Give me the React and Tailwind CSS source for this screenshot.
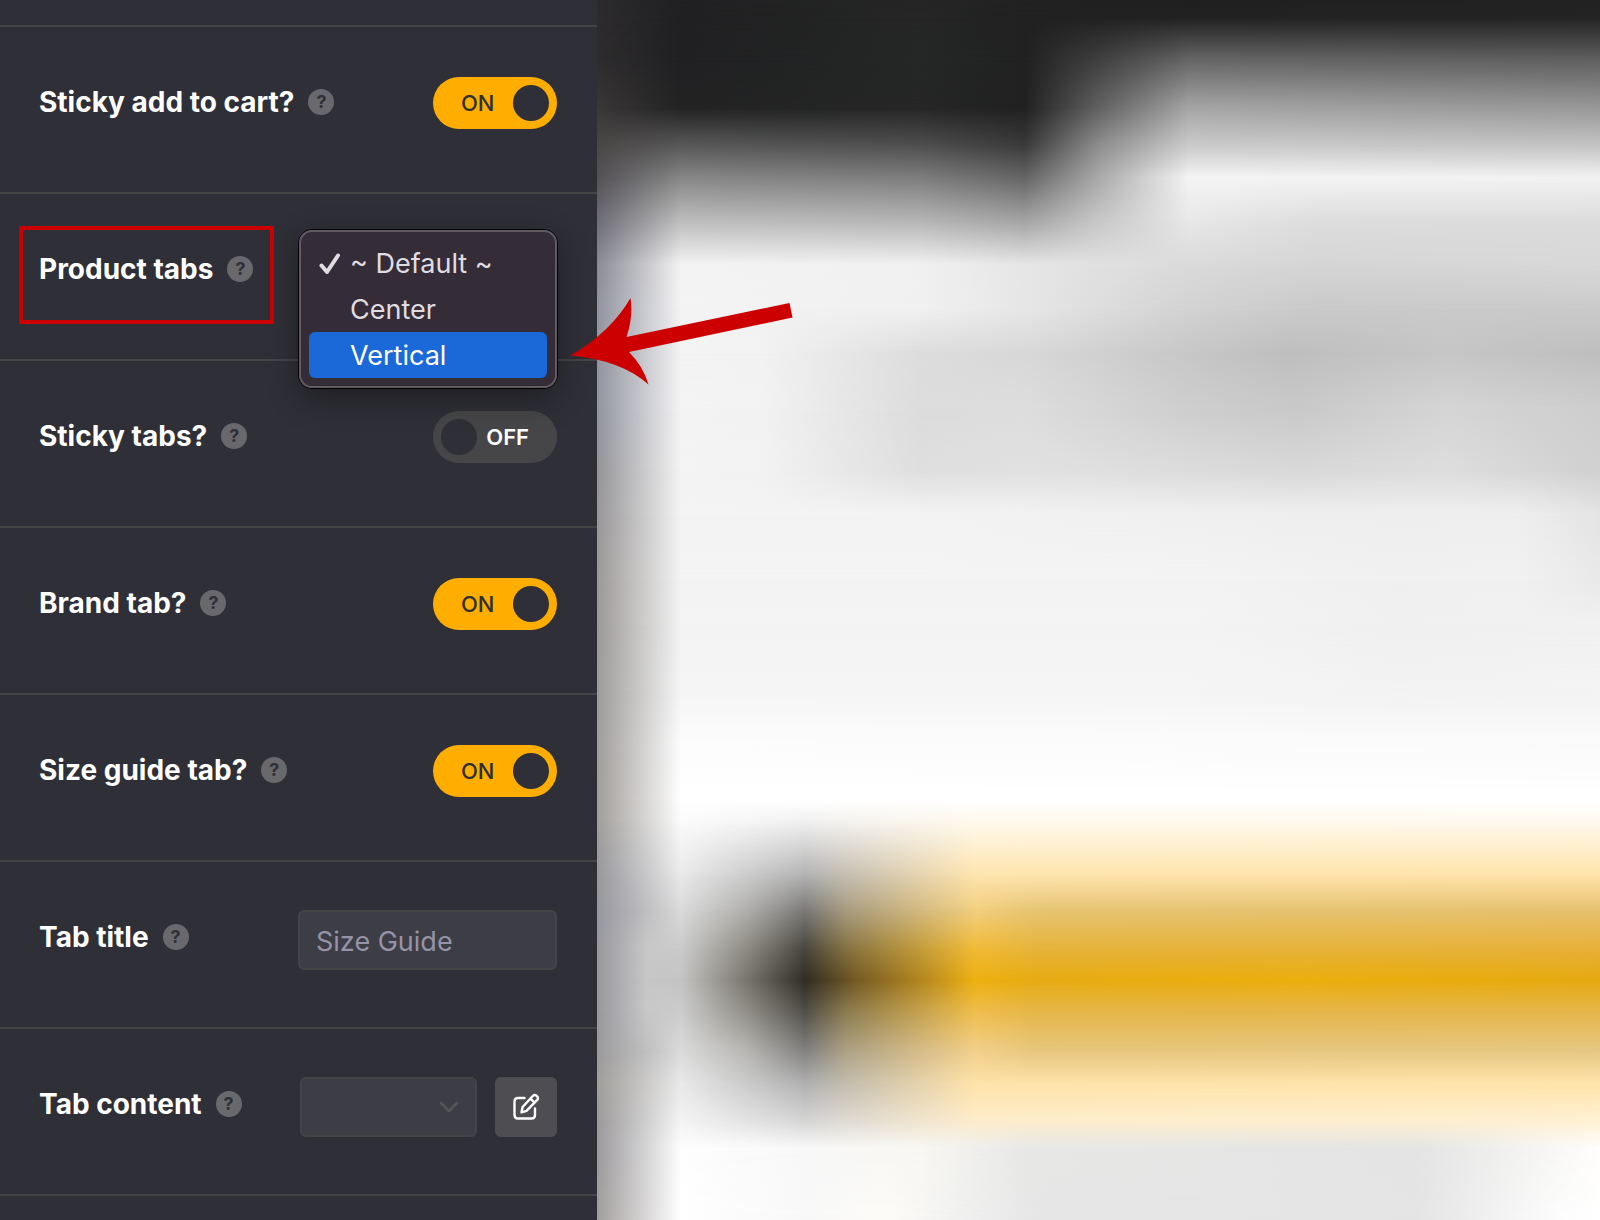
import { ChevronDown } from "lucide-react";

// Blurred page preview: each row is a y position and its horizontal colour stops.
const PREVIEW_ROWS = [
  [0, [[0, "#2c2b2d"], [84, "#202022"], [323, "#252625"], [428, "#212122"], [592, "#1f1f20"], [1003, "#222222"]]],
  [18, [[0, "#2d2b2d"], [84, "#202022"], [323, "#252625"], [428, "#212122"], [592, "#222222"], [1003, "#242424"]]],
  [60, [[0, "#2e2c2e"], [84, "#202022"], [323, "#252726"], [428, "#212122"], [592, "#666666"], [1003, "#606060"]]],
  [108, [[0, "#3a3737"], [84, "#232324"], [323, "#252625"], [428, "#212122"], [500, "#606060"], [592, "#a5a5a5"], [1003, "#989898"]]],
  [145, [[0, "#4b4747"], [84, "#585858"], [323, "#4f4f4f"], [428, "#3a3a3a"], [500, "#8c8c8c"], [592, "#cacaca"], [1003, "#c3c3c3"]]],
  [178, [[0, "#545257"], [84, "#878787"], [323, "#7e7e7e"], [428, "#666666"], [500, "#a8a8a8"], [592, "#f4f4f4"], [1003, "#f2f2f2"]]],
  [220, [[0, "#6d6c74"], [84, "#bcbcbc"], [323, "#b4b4b4"], [428, "#a2a2a2"], [500, "#c6c6c6"], [592, "#e8e8e8"], [720, "#dddddd"], [1003, "#dcdcdc"]]],
  [265, [[0, "#8a8b95"], [84, "#f3f3f3"], [323, "#f1f1f1"], [428, "#e6e6e6"], [592, "#dadada"], [720, "#d5d5d5"], [1003, "#d8d8d8"]]],
  [310, [[0, "#92949f"], [84, "#f3f3f3"], [323, "#f0f0f0"], [428, "#e6e6e6"], [592, "#d2d2d2"], [720, "#c9c9c9"], [1003, "#cacaca"]]],
  [352, [[0, "#92949f"], [84, "#f3f3f3"], [165, "#f2f2f2"], [323, "#dddddd"], [428, "#d8d8d8"], [592, "#c7c7c7"], [690, "#bebebe"], [850, "#c6c6c6"], [1003, "#bebebe"]]],
  [410, [[0, "#92949f"], [84, "#f3f3f3"], [165, "#f2f2f2"], [323, "#dcdcdc"], [428, "#dddddd"], [592, "#cecece"], [700, "#c9c9c9"], [850, "#d5d5d5"], [1003, "#cecece"]]],
  [470, [[0, "#949498"], [84, "#f3f3f3"], [165, "#f2f2f2"], [323, "#dedede"], [428, "#e1e1e1"], [700, "#d8d8d8"], [850, "#dddddd"], [1003, "#d0d0d0"]]],
  [515, [[0, "#989698"], [84, "#f3f3f3"], [323, "#f3f3f3"], [700, "#efefef"], [920, "#efefef"], [1003, "#e4e4e4"]]],
  [580, [[0, "#9c9997"], [84, "#f3f3f3"], [592, "#f3f3f3"], [800, "#f0f0f0"], [920, "#f1f1f1"], [1003, "#e9e9e9"]]],
  [625, [[0, "#9c9997"], [84, "#f3f3f3"], [592, "#f3f3f3"], [800, "#f0f0f0"], [1003, "#f1f1f1"]]],
  [690, [[0, "#9d9b99"], [84, "#f5f5f5"], [592, "#f5f5f5"], [800, "#f2f2f2"], [1003, "#f3f3f3"]]],
  [750, [[0, "#9f9c9a"], [84, "#fdfdfd"], [1003, "#fbfbfb"]]],
  [800, [[0, "#a19d9a"], [84, "#ffffff"], [1003, "#ffffff"]]],
  [822, [[0, "#a09d9a"], [84, "#fbfbfb"], [208, "#f0f0f0"], [378, "#fff9ec"], [1003, "#fff9ee"]]],
  [875, [[0, "#97979c"], [84, "#e9e9e9"], [208, "#b2b2b2"], [378, "#fee4ae"], [1003, "#ffe3a9"]]],
  [910, [[0, "#96969d"], [84, "#dadada"], [150, "#b0afad"], [208, "#7b7a78"], [250, "#a99c80"], [378, "#f2cf7f"], [440, "#e6c474"], [1003, "#e6c170"]]],
  [950, [[0, "#97979d"], [50, "#c8c8c8"], [84, "#cacaca"], [150, "#8c8a80"], [208, "#47453c"], [250, "#85713f"], [378, "#f0ba35"], [440, "#e6b338"], [1003, "#e6b036"]]],
  [980, [[0, "#98989d"], [50, "#c6c6c6"], [84, "#c4c4c4"], [150, "#78756b"], [208, "#302d24"], [260, "#765a23"], [330, "#b98a1e"], [378, "#edb010"], [440, "#e6ab12"], [700, "#ebae0d"], [1003, "#e5a910"]]],
  [1010, [[0, "#97979d"], [50, "#c8c8c8"], [84, "#cbcbcb"], [150, "#8f8d85"], [208, "#504e47"], [250, "#8b7a4e"], [378, "#efbd49"], [440, "#e6b545"], [1003, "#e6b548"]]],
  [1050, [[0, "#9a999b"], [84, "#dadada"], [150, "#b6b5b2"], [208, "#81807f"], [250, "#ada184"], [378, "#f2cf8a"], [440, "#e6c67c"], [1003, "#e6c782"]]],
  [1085, [[0, "#a09d9a"], [84, "#e9e9e9"], [208, "#b2b2b2"], [378, "#fee3ab"], [1003, "#ffe4ac"]]],
  [1120, [[0, "#9c9a9b"], [84, "#f3f3f3"], [208, "#d4d4d4"], [378, "#fdecca"], [1003, "#fff0d2"]]],
  [1148, [[0, "#9b999c"], [84, "#fefefe"], [208, "#f8f8f8"], [323, "#f8f7f3"], [428, "#e8e8e7"], [820, "#e4e4e4"], [1003, "#fffefc"]]],
  [1220, [[0, "#a29e9d"], [84, "#ffffff"], [208, "#f8f8f8"], [290, "#fcfbf8"], [378, "#eeeeee"], [440, "#e6e6e6"], [820, "#e4e4e4"], [960, "#fcfcfc"], [1003, "#ffffff"]]],
];

function rowGradient(stops) {
  const parts = stops.map(([x, color]) => `${color} ${((x / 1003) * 100).toFixed(2)}%`);
  return `linear-gradient(to right, ${parts.join(", ")})`;
}

function BlurredPreview() {
  return (
    <main className="flex min-w-0 flex-1 flex-col" aria-label="Page preview">
      {PREVIEW_ROWS.slice(1).map(([y, stops], i) => {
        const [prevY, prevStops] = PREVIEW_ROWS[i];
        return (
          <div
            key={y}
            className="flex"
            style={{ flex: `${y - prevY} 0 0px`, background: rowGradient(prevStops) }}
          >
            {/* Fades the next row in over this one */}
            <div
              className="flex-1 mask-t-from-0% mask-t-to-100%"
              style={{ background: rowGradient(stops) }}
            />
          </div>
        );
      })}
    </main>
  );
}

function HelpButton({ topic }) {
  return (
    <button
      type="button"
      aria-label={`Help: ${topic}`}
      className="flex size-[26px] shrink-0 items-center justify-center rounded-full bg-[#69696d] text-lg leading-none font-bold text-[#2f2f37]"
    >
      ?
    </button>
  );
}

function Row({ label, htmlFor, children }) {
  return (
    <div className="relative flex h-[167px] items-start justify-between border-b-2 border-[#444446] pt-12 pr-10 pl-[39px]">
      <div className="flex h-[54px] items-center gap-3.5">
        <label htmlFor={htmlFor} className="text-[28px] leading-8 font-[650] whitespace-nowrap text-white">
          {label}
        </label>
        <HelpButton topic={label} />
      </div>
      {children}
    </div>
  );
}

function Toggle({ id, on = false }) {
  return (
    <div className="flex h-14 items-center">
      <button
        id={id}
        type="button"
        role="switch"
        aria-checked={on}
        className={
          on
            ? "flex h-[52px] w-[124px] items-center justify-between rounded-full bg-[#ffae00] pr-2 pl-7 text-[22px] font-medium text-[#2f2f37]"
            : "flex h-[52px] w-[124px] flex-row-reverse items-center justify-between rounded-full bg-[#464649] pr-7 pl-2 text-[22px] font-semibold text-white"
        }
      >
        {on ? "ON" : "OFF"}
        <span className="size-9 rounded-full bg-[#2f2f37]" />
      </button>
    </div>
  );
}

function TabsMenu() {
  const item = "flex h-[46px] w-full items-center rounded-md pt-0.5 pl-[41px] text-left text-[27px] leading-8";
  return (
    <div
      role="listbox"
      aria-label="Product tabs"
      className="absolute top-[35px] right-[39px] z-10 flex h-[160px] w-[260px] flex-col rounded-[14px] border border-black bg-[#342c37] shadow-[0_10px_30px_rgba(0,0,0,0.35)]"
    >
      <div className="flex-1 rounded-[13px] border-2 border-[#605a63] px-2 pt-2">
        <button type="button" role="option" aria-selected="true" className={`${item} relative text-[#e0dde1]`}>
          <svg className="absolute left-2.5 size-[22px]" viewBox="0 0 22 22" fill="none" stroke="currentColor" aria-hidden="true">
            <path d="M2.5 12.5 L8 19 L19 2.5" strokeWidth="4" strokeLinecap="round" strokeLinejoin="round" />
          </svg>
          ~ Default ~
        </button>
        <button type="button" role="option" aria-selected="false" className={`${item} text-[#e0dde1]`}>
          Center
        </button>
        <button type="button" role="option" aria-selected="false" className={`${item} bg-[#1b68d8] text-white`}>
          Vertical
        </button>
      </div>
    </div>
  );
}

function EditIcon() {
  return (
    <svg className="size-7" viewBox="0 0 28 28" fill="none" stroke="currentColor" strokeWidth="2.4" strokeLinecap="round" strokeLinejoin="round" aria-hidden="true">
      <path d="M12.5 5 H6 Q2.5 5 2.5 8.500 V22 Q2.500 25.500 6 25.500 H19.500 Q23 25.500 23 22 V15.500" />
      <path d="M20.800 3 Q22.800 1 24.900 3 Q27 5.100 25 7.200 L14.500 17.800 L9.500 19.300 L10.600 14 Z" />
      <path d="M18.500 5.700 L22.300 9.500" />
    </svg>
  );
}

export default function App() {
  return (
    <div className="relative flex min-h-screen overflow-hidden font-['Inter','Liberation_Sans',sans-serif]">
      <aside className="w-[597px] shrink-0 bg-[#2f2f37]">
        <div className="h-[27px] border-b-2 border-[#444446]" />
        <Row label="Sticky add to cart?" htmlFor="sticky-cart">
          <Toggle id="sticky-cart" on />
        </Row>
        <Row label="Product tabs">
          <div className="pointer-events-none absolute top-8 left-[19px] h-[98px] w-[255px] border-4 border-[#cc0000]" />
          <TabsMenu />
        </Row>
        <Row label="Sticky tabs?" htmlFor="sticky-tabs">
          <Toggle id="sticky-tabs" />
        </Row>
        <Row label="Brand tab?" htmlFor="brand-tab">
          <Toggle id="brand-tab" on />
        </Row>
        <Row label="Size guide tab?" htmlFor="size-guide-tab">
          <Toggle id="size-guide-tab" on />
        </Row>
        <Row label="Tab title" htmlFor="tab-title">
          <input
            id="tab-title"
            type="text"
            placeholder="Size Guide"
            className="h-[60px] w-[259px] rounded-md border-2 border-[#444446] bg-[#3d3d46] px-4 pt-0.5 text-[27px] text-white placeholder:text-[#9693a8]"
          />
        </Row>
        <Row label="Tab content" htmlFor="tab-content">
          <div className="flex gap-[18px]">
            <div className="grid items-center">
              <select
                id="tab-content"
                className="col-start-1 row-start-1 h-[60px] w-[177px] appearance-none rounded-md border-2 border-[#444446] bg-[#3d3d46] px-4 text-[27px] text-white"
              />
              <ChevronDown className="pointer-events-none col-start-1 row-start-1 mr-3 size-8 justify-self-end text-[#555558]" aria-hidden="true" />
            </div>
            <button
              type="button"
              aria-label="Edit tab content"
              className="flex h-[60px] w-[62px] items-center justify-center rounded-md bg-[#4e4e52] text-white"
            >
              <EditIcon />
            </button>
          </div>
        </Row>
      </aside>
      <BlurredPreview />
      {/* Pointer to the highlighted option */}
      <svg className="pointer-events-none absolute top-[296px] left-[570px] z-20 h-[90px] w-[224px]" viewBox="0 0 224 90" aria-hidden="true">
        <path
          d="M0.500 59.500 Q41 36 60.500 2 Q63.500 20 56.500 41 L219.500 7 L222.500 21.500 L59 56 Q73 70 78.500 88.500 Q51 64 0.500 59.500 Z"
          fill="#cc0000"
        />
      </svg>
    </div>
  );
}
